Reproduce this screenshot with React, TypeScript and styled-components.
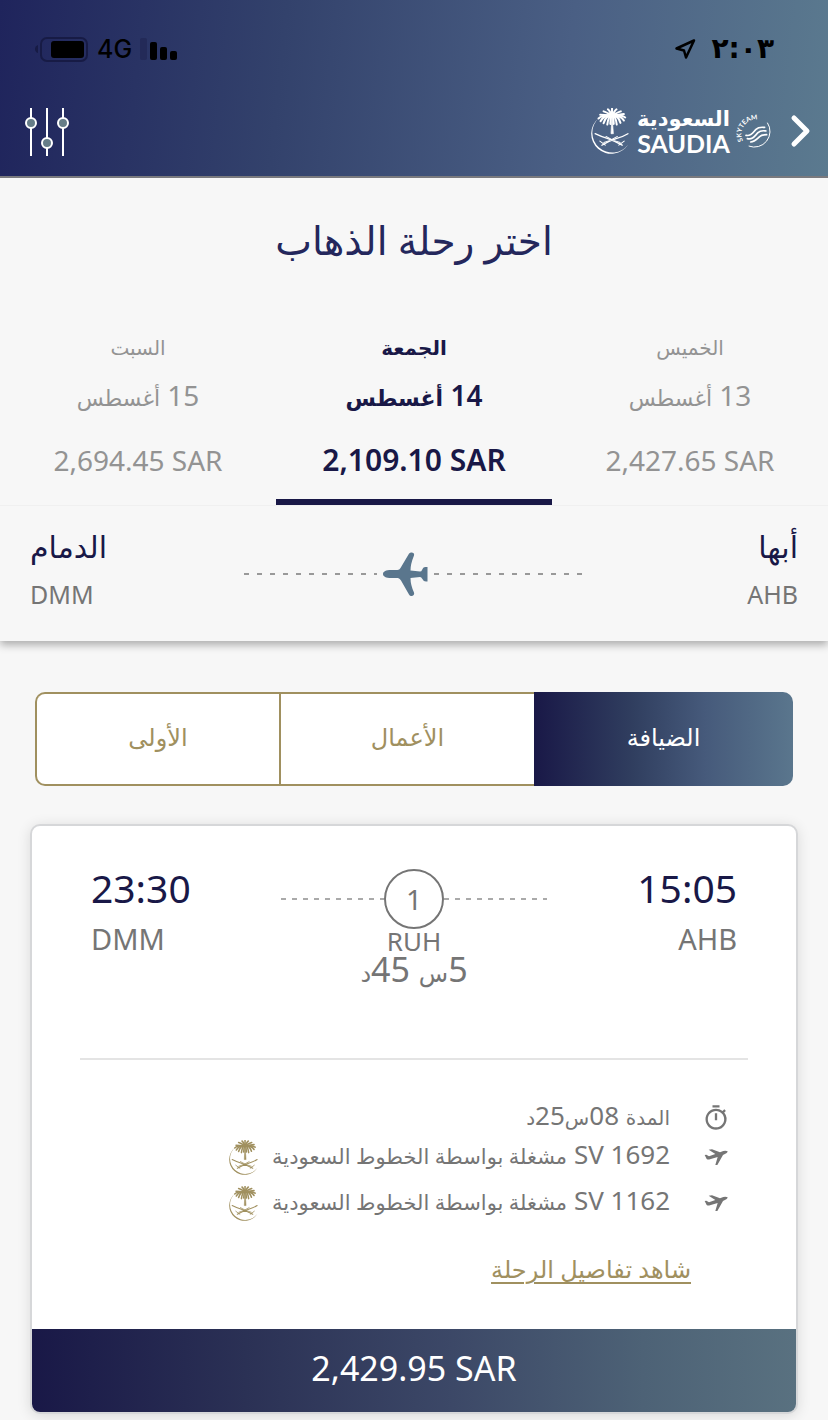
import React from 'react';
import styled, { createGlobalStyle } from 'styled-components';
import { MdOutlineTimer } from 'react-icons/md';

const navy = '#191847';
const gold = '#a0905f';
const grey = '#757575';
const steel = '#5a768d';

const GlobalStyle = createGlobalStyle`
  * { box-sizing: border-box; }
  body {
    margin: 0;
    background: #f7f7f7;
    font-family: 'Noto Sans', 'DejaVu Sans', sans-serif;
    color: ${grey};
  }
  button { font: inherit; border: 0; padding: 0; background: none; cursor: pointer; }
`;

const Page = styled.div`
  direction: rtl;
  min-height: 100vh;
`;

/* ---------- header ---------- */

const Header = styled.header`
  height: 178px;
  padding: 24px 16px 0 24px;
  border-bottom: 2px solid #7a7a7e;
  background: linear-gradient(96deg, #1f245c 0%, #33426c 34%, #4a5f84 68%, #5b7a8f 100%);
`;

const StatusBar = styled.div`
  height: 50px;
  display: flex;
  align-items: center;
  justify-content: space-between;
  padding: 0 38px 0 11px;
  color: #000;
`;

const StatusGroup = styled.div`
  display: flex;
  align-items: center;
  gap: 8px;
  direction: ltr;
`;

const Clock = styled.span`
  margin-left: 8px;
  font: 700 28px/40px 'DejaVu Sans', sans-serif;
`;

const Network = styled.span`
  font: 500 25px/40px Inter, sans-serif;
`;

const NavBar = styled.nav`
  height: 80px;
  margin-top: 18px;
  display: flex;
  align-items: center;
  justify-content: space-between;
`;

const Brand = styled.div`
  display: flex;
  align-items: center;
  gap: 8px;
  padding-bottom: 2px;
  color: #fff;
`;

const IconButton = styled.button`
  display: flex;
  color: #fff;
`;

const BackButton = styled(IconButton)`
  margin-left: 10px;
`;

const WordMark = styled.div`
  width: 93px;
  display: flex;
  flex-direction: column;
  align-items: center;
  white-space: nowrap;
`;

const WordMarkArabic = styled.span`
  font: 700 21px/25px 'DejaVu Sans', sans-serif;
`;

const WordMarkLatin = styled.span`
  font: 700 25px/23px Lato, sans-serif;
`;

/* ---------- day picker ---------- */

const Title = styled.h1`
  margin: 0;
  padding-top: 36px;
  text-align: center;
  font-size: 39px;
  line-height: 52px;
  font-weight: 400;
  color: #24275c;
`;

const Days = styled.div`
  margin-top: 65px;
  display: grid;
  grid-template-columns: repeat(3, 1fr);
`;

const DayTab = styled.button<{ $active?: boolean }>`
  height: 174px;
  display: flex;
  flex-direction: column;
  align-items: center;
  color: ${(p) => (p.$active ? navy : '#939393')};
  font-weight: ${(p) => (p.$active ? 600 : 400)};
  border-bottom: 6px solid ${(p) => (p.$active ? navy : 'transparent')};
`;

const DayName = styled.span`
  font-size: 20px;
  line-height: 34px;
`;

const DayDate = styled.span`
  font-size: 28px;
  line-height: 40px;
  margin-top: 10px;
`;

const Small = styled.span<{ $size?: number }>`
  font-size: ${(p) => p.$size ?? 24}px;
`;

const DayPrice = styled.span<{ $active?: boolean }>`
  font-size: ${(p) => (p.$active ? 30 : 28)}px;
  line-height: 40px;
  margin-top: 23px;
`;

/* ---------- route ---------- */

const Route = styled.section`
  height: 136px;
  padding: 16px 30px 0;
  display: flex;
  justify-content: space-between;
  border-top: 1px solid #f0f0f0;
  box-shadow: 0 4px 8px rgba(0, 0, 0, 0.3);
  clip-path: inset(0 0 -16px 0);
`;

const Place = styled.div<{ $end?: boolean }>`
  width: 120px;
  display: flex;
  flex-direction: column;
  align-items: ${(p) => (p.$end ? 'flex-end' : 'flex-start')};
`;

const City = styled.span`
  font-size: 30px;
  line-height: 50px;
  color: ${navy};
`;

const Code = styled.span<{ $large?: boolean }>`
  font-size: ${(p) => (p.$large ? 29 : 25)}px;
  line-height: ${(p) => (p.$large ? 52 : 44)}px;
`;

const RouteLine = styled.div`
  flex: 0 1 340px;
  height: 104px;
  display: flex;
  align-items: center;
  gap: 6px;
`;

const Dashes = styled.span<{ $period: number; $color: string; $grow?: number }>`
  flex: ${(p) => p.$grow ?? 1} 1 0;
  height: 2px;
  background: repeating-linear-gradient(
    90deg,
    ${(p) => p.$color} 0 5px,
    transparent 5px ${(p) => p.$period}px
  );
`;

/* ---------- cabins ---------- */

const Cabins = styled.div`
  margin: 51px 35px 0;
  display: grid;
  grid-template-columns: 259fr 255fr 244fr;
  height: 94px;
`;

const CabinButton = styled.button<{ $active?: boolean }>`
  padding-bottom: 6px;
  font-size: 24px;
  color: ${(p) => (p.$active ? '#fff' : gold)};
  background: ${(p) =>
    p.$active ? `linear-gradient(90deg, ${navy}, #303e5f 38%, #465a7b 66%, ${steel})` : '#fff'};
  border: solid ${gold};
  border-width: ${(p) => (p.$active ? '0' : '2px 0 2px 2px')};
  &:first-child { border-radius: 0 10px 10px 0; }
  &:last-child { border-radius: 10px 0 0 10px; }
`;

/* ---------- flight card ---------- */

const Card = styled.article`
  margin: 38px 30px 7px;
  border: 2px solid #d6d7d9;
  border-radius: 10px;
  overflow: hidden;
  background: #fff;
  box-shadow: 0 2px 14px rgba(0, 0, 0, 0.12);
`;

const Legs = styled.div`
  height: 232px;
  padding: 37px 59px 0;
  display: flex;
  justify-content: space-between;
`;

const Time = styled.span`
  font-size: 39px;
  line-height: 50px;
  color: ${navy};
`;

const Stops = styled.div`
  flex: 0 1 266px;
  padding-top: 6px;
  display: flex;
  flex-direction: column;
  align-items: center;
`;

const StopsLine = styled.div`
  align-self: stretch;
  display: flex;
  align-items: center;
`;

const StopCount = styled.span`
  width: 60px;
  height: 60px;
  border: 2px solid ${grey};
  border-radius: 50%;
  font-size: 28px;
  line-height: 56px;
  text-align: center;
`;

const StopCode = styled.span`
  font-size: 26px;
  line-height: 25px;
`;

const Duration = styled.span`
  font-size: 34px;
  line-height: 30px;
`;

const Details = styled.div`
  margin: 0 48px;
  padding: 42px 20px 0 0;
  border-top: 2px solid #e4e4e4;
`;

const DetailRow = styled.div<{ $height: number }>`
  height: ${(p) => p.$height}px;
  display: flex;
  align-items: center;
  font-size: 26px;
  line-height: 36px;
  white-space: nowrap;
`;

const DetailIcon = styled.span`
  width: 24px;
  display: flex;
  justify-content: center;
  margin-left: 34px;
  svg { flex: none; }
`;

const DetailText = styled.span`
  margin-left: 14px;
  padding-bottom: 4px;
`;

const DetailsLink = styled.a`
  display: block;
  width: max-content;
  margin: 25px 37px 42px 0;
  font-size: 24px;
  line-height: 36px;
  color: ${gold};
  text-decoration: underline;
  text-decoration-thickness: 2px;
  text-underline-offset: 4px;
`;

const PriceButton = styled.button`
  display: block;
  width: 100%;
  height: 83px;
  padding-bottom: 6px;
  font-size: 34px;
  color: #fff;
  background: linear-gradient(90deg, ${navy}, #2b3155 28%, #3c4867 55%, #4d6276 80%, #597180);
`;

/* ---------- drawings ---------- */

const frondTips = [
  [22, 31], [28, 39], [37, 45], [48, 49], [57, 47], [67, 47], [76, 49], [87, 44], [97, 37], [101, 28],
  [62, 2], [50, 4], [75, 4], [37, 10], [88, 10], [27, 20], [97, 18],
];

const Emblem = ({ width, color }: { width: number; color: string }) => (
  <svg width={width} height={Math.round(width * 1.2)} viewBox="0 0 112 136" fill="none" stroke={color}>
    {frondTips.map(([x, y]) => (
      <path key={`${x}-${y}`} strokeWidth="6" strokeLinecap="round"
        d={`M62 22 Q${(62 + x) / 2 + (x - 62) * 0.2} ${Math.min(20, y + 2)} ${x} ${y}`} />
    ))}
    <path d="M62 22 L59 76 H66 Z" fill={color} strokeWidth="2" />
    <path strokeWidth="4" strokeLinecap="round" d="M12 76 Q28 84 48 90 Q70 98 92 110 M109 76 Q96 84 76 90 Q52 98 32 110" />
    <path strokeWidth="3" strokeLinecap="round" d="M26 98 L42 110 M98 98 L82 110 M44 84 Q62 96 86 102 M78 84 Q60 96 38 102" />
    <path fill={color} stroke="none" d="M22 30 A59.500 59.500 0 1 0 110 108 A59 59 0 1 1 22 30 Z" />
  </svg>
);

const SkyTeam = () => (
  <svg width="34" height="42" viewBox="0 0 102 126" fill="none" stroke="#fff" direction="ltr" overflow="visible">
    <path id="ring" stroke="none" d="M17 96 A44 44 0 0 1 80 37" />
    <text fill="#fff" stroke="none" fontFamily="Lato, sans-serif" fontWeight="700" fontSize="20">
      <textPath href="#ring" startOffset="4">SKYTEAM</textPath>
    </text>
    <path strokeWidth="3" d="M88 38 A47 47 0 0 1 32 108" />
    <path strokeWidth="5" strokeLinecap="round"
      d="M24 76 C40 80 46 66 54 58 C62 50 70 52 80 52 M28 86 C44 90 50 78 60 68 C68 60 76 62 84 63 M38 96 C50 96 58 86 66 79 C72 74 78 74 86 74" />
  </svg>
);

const PlaneLeft = () => (
  <svg width="45" height="45" viewBox="0 0 45 45" fill={steel}>
    <path d="M0 22 C0 19.500 3 18 8 18 H14.500 Q16.500 18 17.500 16 L25.500 2.500 C27-.5 32 0 31 3.500 Q27.500 12 27.500 18.500 L37 19.500 Q38.500 19.500 39 18 Q40 15 42 15 H44.500 V29.500 H43 Q40 29 39 26.500 Q38.500 25 37 25 L27.500 26 Q27.500 33 31 40.500 C32 44.500 27.500 45 26 42.500 L18 28.500 Q17 26.500 15 26 H8 C3 26 0 24.500 0 22Z" />
  </svg>
);

const PlaneTakeoff = () => (
  <svg width="24" height="18" viewBox="0 0 72 54" fill={grey}>
    <path d="M71 10 Q66 7 58 9 L48 13 L24 4 L14 5 L34 18 L15 25 L7 20 L2 21 L8 33 Q12 36 18 34 L41 27 L34 51 L40 51 L57 21 L67 16 Q71 13 71 10 Z" />
  </svg>
);

const LocationArrow = () => (
  <svg width="22" height="22" viewBox="0 0 22 22" fill="none" stroke="#000" strokeWidth="2.5" strokeLinejoin="round">
    <path d="M20 2.500 L2.500 10.500 L10 12.500 L12 19.500 Z" />
  </svg>
);

const Battery = () => (
  <svg width="54" height="26" viewBox="0 0 54 26">
    <path d="M3 9 Q0 10 0 13 Q0 16 3 17Z" fill="#171b45" />
    <rect x="6" y="2" width="46" height="23" rx="6" fill="none" stroke="#171b45" strokeWidth="2" />
    <rect x="16" y="5" width="33" height="17" rx="3" fill="#000" />
  </svg>
);

const Signal = () => (
  <svg width="38" height="24" viewBox="0 0 38 24">
    <rect x="0" y="1" width="7" height="22" rx="2" fill="#232a58" />
    <rect x="10" y="5" width="7" height="18" rx="2" />
    <rect x="20" y="10" width="7" height="13" rx="2" />
    <rect x="30" y="14" width="7" height="9" rx="2" />
  </svg>
);

const Sliders = () => (
  <svg width="46" height="48" viewBox="0 0 46 48" stroke="#fff" strokeWidth="2" fill="#667d88">
    <path d="M7 0V48M23 0V48M39 0V48" />
    <circle cx="7" cy="15" r="5" />
    <circle cx="23" cy="35" r="5" />
    <circle cx="39" cy="15" r="5" />
  </svg>
);

const Chevron = () => (
  <svg width="22" height="36" viewBox="0 0 22 36" fill="none" stroke="#fff" strokeWidth="5" strokeLinecap="round" strokeLinejoin="round">
    <path d="M4 5 L17 18 L4 31" />
  </svg>
);

/* ---------- data ---------- */

const days = [
  { name: 'الخميس', day: 13, price: '2,427.65 SAR' },
  { name: 'الجمعة', day: 14, price: '2,109.10 SAR', active: true },
  { name: 'السبت', day: 15, price: '2,694.45 SAR' },
];

const cabins = ['الضيافة', 'الأعمال', 'الأولى'];
const flights = ['SV 1692', 'SV 1162'];

export default function App() {
  return (
    <Page lang="ar">
      <GlobalStyle />
      <Header>
        <StatusBar>
          <StatusGroup>
            <LocationArrow />
            <Clock>٢:٠٣</Clock>
          </StatusGroup>
          <StatusGroup>
            <Battery />
            <Network>4G</Network>
            <Signal />
          </StatusGroup>
        </StatusBar>
        <NavBar>
          <Brand>
            <BackButton aria-label="رجوع"><Chevron /></BackButton>
            <SkyTeam />
            <WordMark>
              <WordMarkArabic>السعودية</WordMarkArabic>
              <WordMarkLatin>SAUDIA</WordMarkLatin>
            </WordMark>
            <Emblem width={38} color="#fff" />
          </Brand>
          <IconButton aria-label="تصفية"><Sliders /></IconButton>
        </NavBar>
      </Header>

      <main>
        <Title>اختر رحلة الذهاب</Title>
        <Days>
          {days.map((d) => (
            <DayTab key={d.day} $active={d.active}>
              <DayName>{d.name}</DayName>
              <DayDate>{d.day} <Small $size={22}>أغسطس</Small></DayDate>
              <DayPrice dir="ltr" $active={d.active}>{d.price}</DayPrice>
            </DayTab>
          ))}
        </Days>

        <Route>
          <Place>
            <City>أبها</City>
            <Code>AHB</Code>
          </Place>
          <RouteLine>
            <Dashes $period={13} $color="#999" $grow={150} />
            <PlaneLeft />
            <Dashes $period={13} $color="#999" $grow={133} />
          </RouteLine>
          <Place $end>
            <City>الدمام</City>
            <Code>DMM</Code>
          </Place>
        </Route>

        <Cabins>
          {cabins.map((name, i) => (
            <CabinButton key={name} $active={i === 0}>{name}</CabinButton>
          ))}
        </Cabins>

        <Card>
          <Legs>
            <Place>
              <Time>15:05</Time>
              <Code $large>AHB</Code>
            </Place>
            <Stops>
              <StopsLine>
                <Dashes $period={11} $color="#aaa" />
                <StopCount>1</StopCount>
                <Dashes $period={11} $color="#aaa" />
              </StopsLine>
              <StopCode>RUH</StopCode>
              <Duration>5<Small>س</Small> 45<Small>د</Small></Duration>
            </Stops>
            <Place $end>
              <Time>23:30</Time>
              <Code $large>DMM</Code>
            </Place>
          </Legs>
          <Details>
            <DetailRow $height={32}>
              <DetailIcon><MdOutlineTimer size={28} /></DetailIcon>
              <DetailText>
                <Small $size={20}>المدة</Small> 08<Small $size={20}>س</Small>25<Small $size={20}>د</Small>
              </DetailText>
            </DetailRow>
            {flights.map((flight) => (
              <DetailRow $height={46} key={flight}>
                <DetailIcon><PlaneTakeoff /></DetailIcon>
                <DetailText>{flight} <Small $size={21}>مشغلة بواسطة الخطوط السعودية</Small></DetailText>
                <Emblem width={29} color={gold} />
              </DetailRow>
            ))}
            <DetailsLink href="#details">شاهد تفاصيل الرحلة</DetailsLink>
          </Details>
          <PriceButton dir="ltr">2,429.95 SAR</PriceButton>
        </Card>
      </main>
    </Page>
  );
}
